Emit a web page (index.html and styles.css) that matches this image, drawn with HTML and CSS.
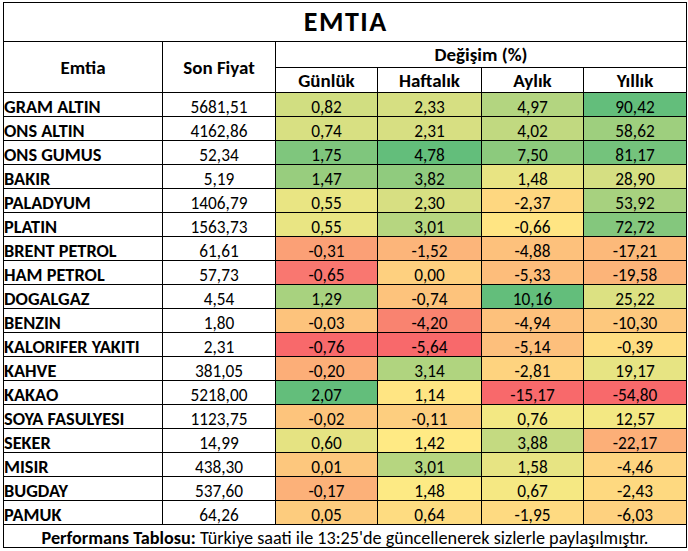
FILE: index.html
```html
<!DOCTYPE html>
<html lang="tr">
<head>
<meta charset="utf-8">
<title>EMTIA</title>
<link rel="stylesheet" href="styles.css">
</head>
<body>
<table class="sheet">
  <colgroup>
    <col class="c-name">
    <col class="c-price">
    <col class="c-d">
    <col class="c-w">
    <col class="c-m">
    <col class="c-y">
  </colgroup>
  <thead>
    <tr class="r-title"><th colspan="6" class="title">EMTIA</th></tr>
    <tr class="r-h1">
      <th rowspan="2" class="hd">Emtia</th>
      <th rowspan="2" class="hd">Son Fiyat</th>
      <th colspan="4" class="hd">Değişim (%)</th>
    </tr>
    <tr class="r-h2">
      <th class="hd">Günlük</th>
      <th class="hd">Haftalık</th>
      <th class="hd">Aylık</th>
      <th class="hd">Yıllık</th>
    </tr>
  </thead>
  <tbody>
    <tr><td class="name">GRAM ALTIN</td><td class="num">5681,51</td><td class="num" style="background:#D1DE81">0,82</td><td class="num" style="background:#D6DF82">2,33</td><td class="num" style="background:#B3D580">4,97</td><td class="num" style="background:#63BE7B">90,42</td></tr>
    <tr><td class="name">ONS ALTIN</td><td class="num">4162,86</td><td class="num" style="background:#D8E082">0,74</td><td class="num" style="background:#D7DF82">2,31</td><td class="num" style="background:#C1D980">4,02</td><td class="num" style="background:#9ECF7E">58,62</td></tr>
    <tr><td class="name">ONS GUMUS</td><td class="num">52,34</td><td class="num" style="background:#7FC67D">1,75</td><td class="num" style="background:#63BE7B">4,78</td><td class="num" style="background:#8CCA7D">7,50</td><td class="num" style="background:#74C37C">81,17</td></tr>
    <tr><td class="name">BAKIR</td><td class="num">5,19</td><td class="num" style="background:#98CD7E">1,47</td><td class="num" style="background:#90CB7E">3,82</td><td class="num" style="background:#E8E483">1,48</td><td class="num" style="background:#D5DF82">28,90</td></tr>
    <tr><td class="name">PALADYUM</td><td class="num">1406,79</td><td class="num" style="background:#E9E583">0,55</td><td class="num" style="background:#D7DF82">2,30</td><td class="num" style="background:#FED780">-2,37</td><td class="num" style="background:#A7D17F">53,92</td></tr>
    <tr><td class="name">PLATIN</td><td class="num">1563,73</td><td class="num" style="background:#E9E583">0,55</td><td class="num" style="background:#B6D680">3,01</td><td class="num" style="background:#FFE583">-0,66</td><td class="num" style="background:#84C77D">72,72</td></tr>
    <tr><td class="name">BRENT PETROL</td><td class="num">61,61</td><td class="num" style="background:#FBA076">-0,31</td><td class="num" style="background:#FCB57A">-1,52</td><td class="num" style="background:#FDC17C">-4,88</td><td class="num" style="background:#FCB97A">-17,21</td></tr>
    <tr><td class="name">HAM PETROL</td><td class="num">57,73</td><td class="num" style="background:#F97770">-0,65</td><td class="num" style="background:#FED07F">0,00</td><td class="num" style="background:#FDBD7B">-5,33</td><td class="num" style="background:#FCB479">-19,58</td></tr>
    <tr><td class="name">DOGALGAZ</td><td class="num">4,54</td><td class="num" style="background:#A8D27F">1,29</td><td class="num" style="background:#FDC37C">-0,74</td><td class="num" style="background:#63BE7B">10,16</td><td class="num" style="background:#DCE182">25,22</td></tr>
    <tr><td class="name">BENZIN</td><td class="num">1,80</td><td class="num" style="background:#FDC37C">-0,03</td><td class="num" style="background:#F98370">-4,20</td><td class="num" style="background:#FDC17C">-4,94</td><td class="num" style="background:#FDC87D">-10,30</td></tr>
    <tr><td class="name">KALORIFER YAKITI</td><td class="num">2,31</td><td class="num" style="background:#F8696B">-0,76</td><td class="num" style="background:#F8696B">-5,64</td><td class="num" style="background:#FDBF7C">-5,14</td><td class="num" style="background:#FEDD81">-0,39</td></tr>
    <tr><td class="name">KAHVE</td><td class="num">381,05</td><td class="num" style="background:#FCAE78">-0,20</td><td class="num" style="background:#B0D47F">3,14</td><td class="num" style="background:#FED37F">-2,81</td><td class="num" style="background:#E7E483">19,17</td></tr>
    <tr><td class="name">KAKAO</td><td class="num">5218,00</td><td class="num" style="background:#63BE7B">2,07</td><td class="num" style="background:#FFE583">1,14</td><td class="num" style="background:#F8696B">-15,17</td><td class="num" style="background:#F8696B">-54,80</td></tr>
    <tr><td class="name">SOYA FASULYESI</td><td class="num">1123,75</td><td class="num" style="background:#FDC47C">-0,02</td><td class="num" style="background:#FDCE7F">-0,11</td><td class="num" style="background:#F3E883">0,76</td><td class="num" style="background:#F3E883">12,57</td></tr>
    <tr><td class="name">SEKER</td><td class="num">14,99</td><td class="num" style="background:#E5E382">0,60</td><td class="num" style="background:#FFEA84">1,42</td><td class="num" style="background:#C4DA81">3,88</td><td class="num" style="background:#FCAF78">-22,17</td></tr>
    <tr><td class="name">MISIR</td><td class="num">438,30</td><td class="num" style="background:#FDC77D">0,01</td><td class="num" style="background:#B6D680">3,01</td><td class="num" style="background:#E7E483">1,58</td><td class="num" style="background:#FED480">-4,46</td></tr>
    <tr><td class="name">BUGDAY</td><td class="num">537,60</td><td class="num" style="background:#FCB179">-0,17</td><td class="num" style="background:#FDEA84">1,48</td><td class="num" style="background:#F5E883">0,67</td><td class="num" style="background:#FED980">-2,43</td></tr>
    <tr><td class="name">PAMUK</td><td class="num">64,26</td><td class="num" style="background:#FDCC7E">0,05</td><td class="num" style="background:#FEDC81">0,64</td><td class="num" style="background:#FEDA81">-1,95</td><td class="num" style="background:#FED17F">-6,03</td></tr>
  </tbody>
  <tfoot>
    <tr class="r-foot"><td colspan="6" class="foot"><b>Performans Tablosu:</b> Türkiye saati ile 13:25'de güncellenerek sizlerle paylaşılmıştır.</td></tr>
  </tfoot>
</table>
</body>
</html>
```
FILE: styles.css
```css
html, body {
  margin: 0;
  padding: 0;
  background: #ffffff;
}
body {
  padding: 2px 0 0 3px;
  font-family: Carlito, Calibri, Lato, "Liberation Sans", sans-serif;
  color: #000;
}
.sheet {
  border-collapse: collapse;
  table-layout: fixed;
  width: 684px;
}
.c-name { width: 159px; }
.c-price { width: 113px; }
.c-d { width: 102px; }
.c-w { width: 104px; }
.c-m { width: 102px; }
.c-y { width: 103px; }
.sheet th, .sheet td {
  border: 1px solid #000;
  padding: 0;
  overflow: hidden;
  white-space: nowrap;
}
.r-title { height: 39px; }
.r-h1 { height: 26px; }
.r-h2 { height: 25px; }
tbody tr { height: 24px; }
.r-foot { height: 23px; }
.title {
  font-size: 28px;
  font-weight: 700;
  letter-spacing: 1.5px;
  text-indent: 1.5px;
  text-align: center;
  line-height: 1;
}
.hd {
  font-size: 19px;
  font-weight: 700;
  text-align: center;
  line-height: 1;
}
.name {
  font-size: 18.3px;
  font-weight: 700;
  text-align: left;
  vertical-align: bottom;
  padding: 0 0 3px 3px;
  line-height: 1;
}
.num {
  font-size: 17.3px;
  text-align: center;
  vertical-align: bottom;
  padding-bottom: 3px;
  line-height: 1;
}
.foot {
  font-size: 18.2px;
  text-align: center;
  vertical-align: bottom;
  padding: 0 0 1px 34px;
  line-height: 1;
}
.foot b { font-weight: 700; }
```
